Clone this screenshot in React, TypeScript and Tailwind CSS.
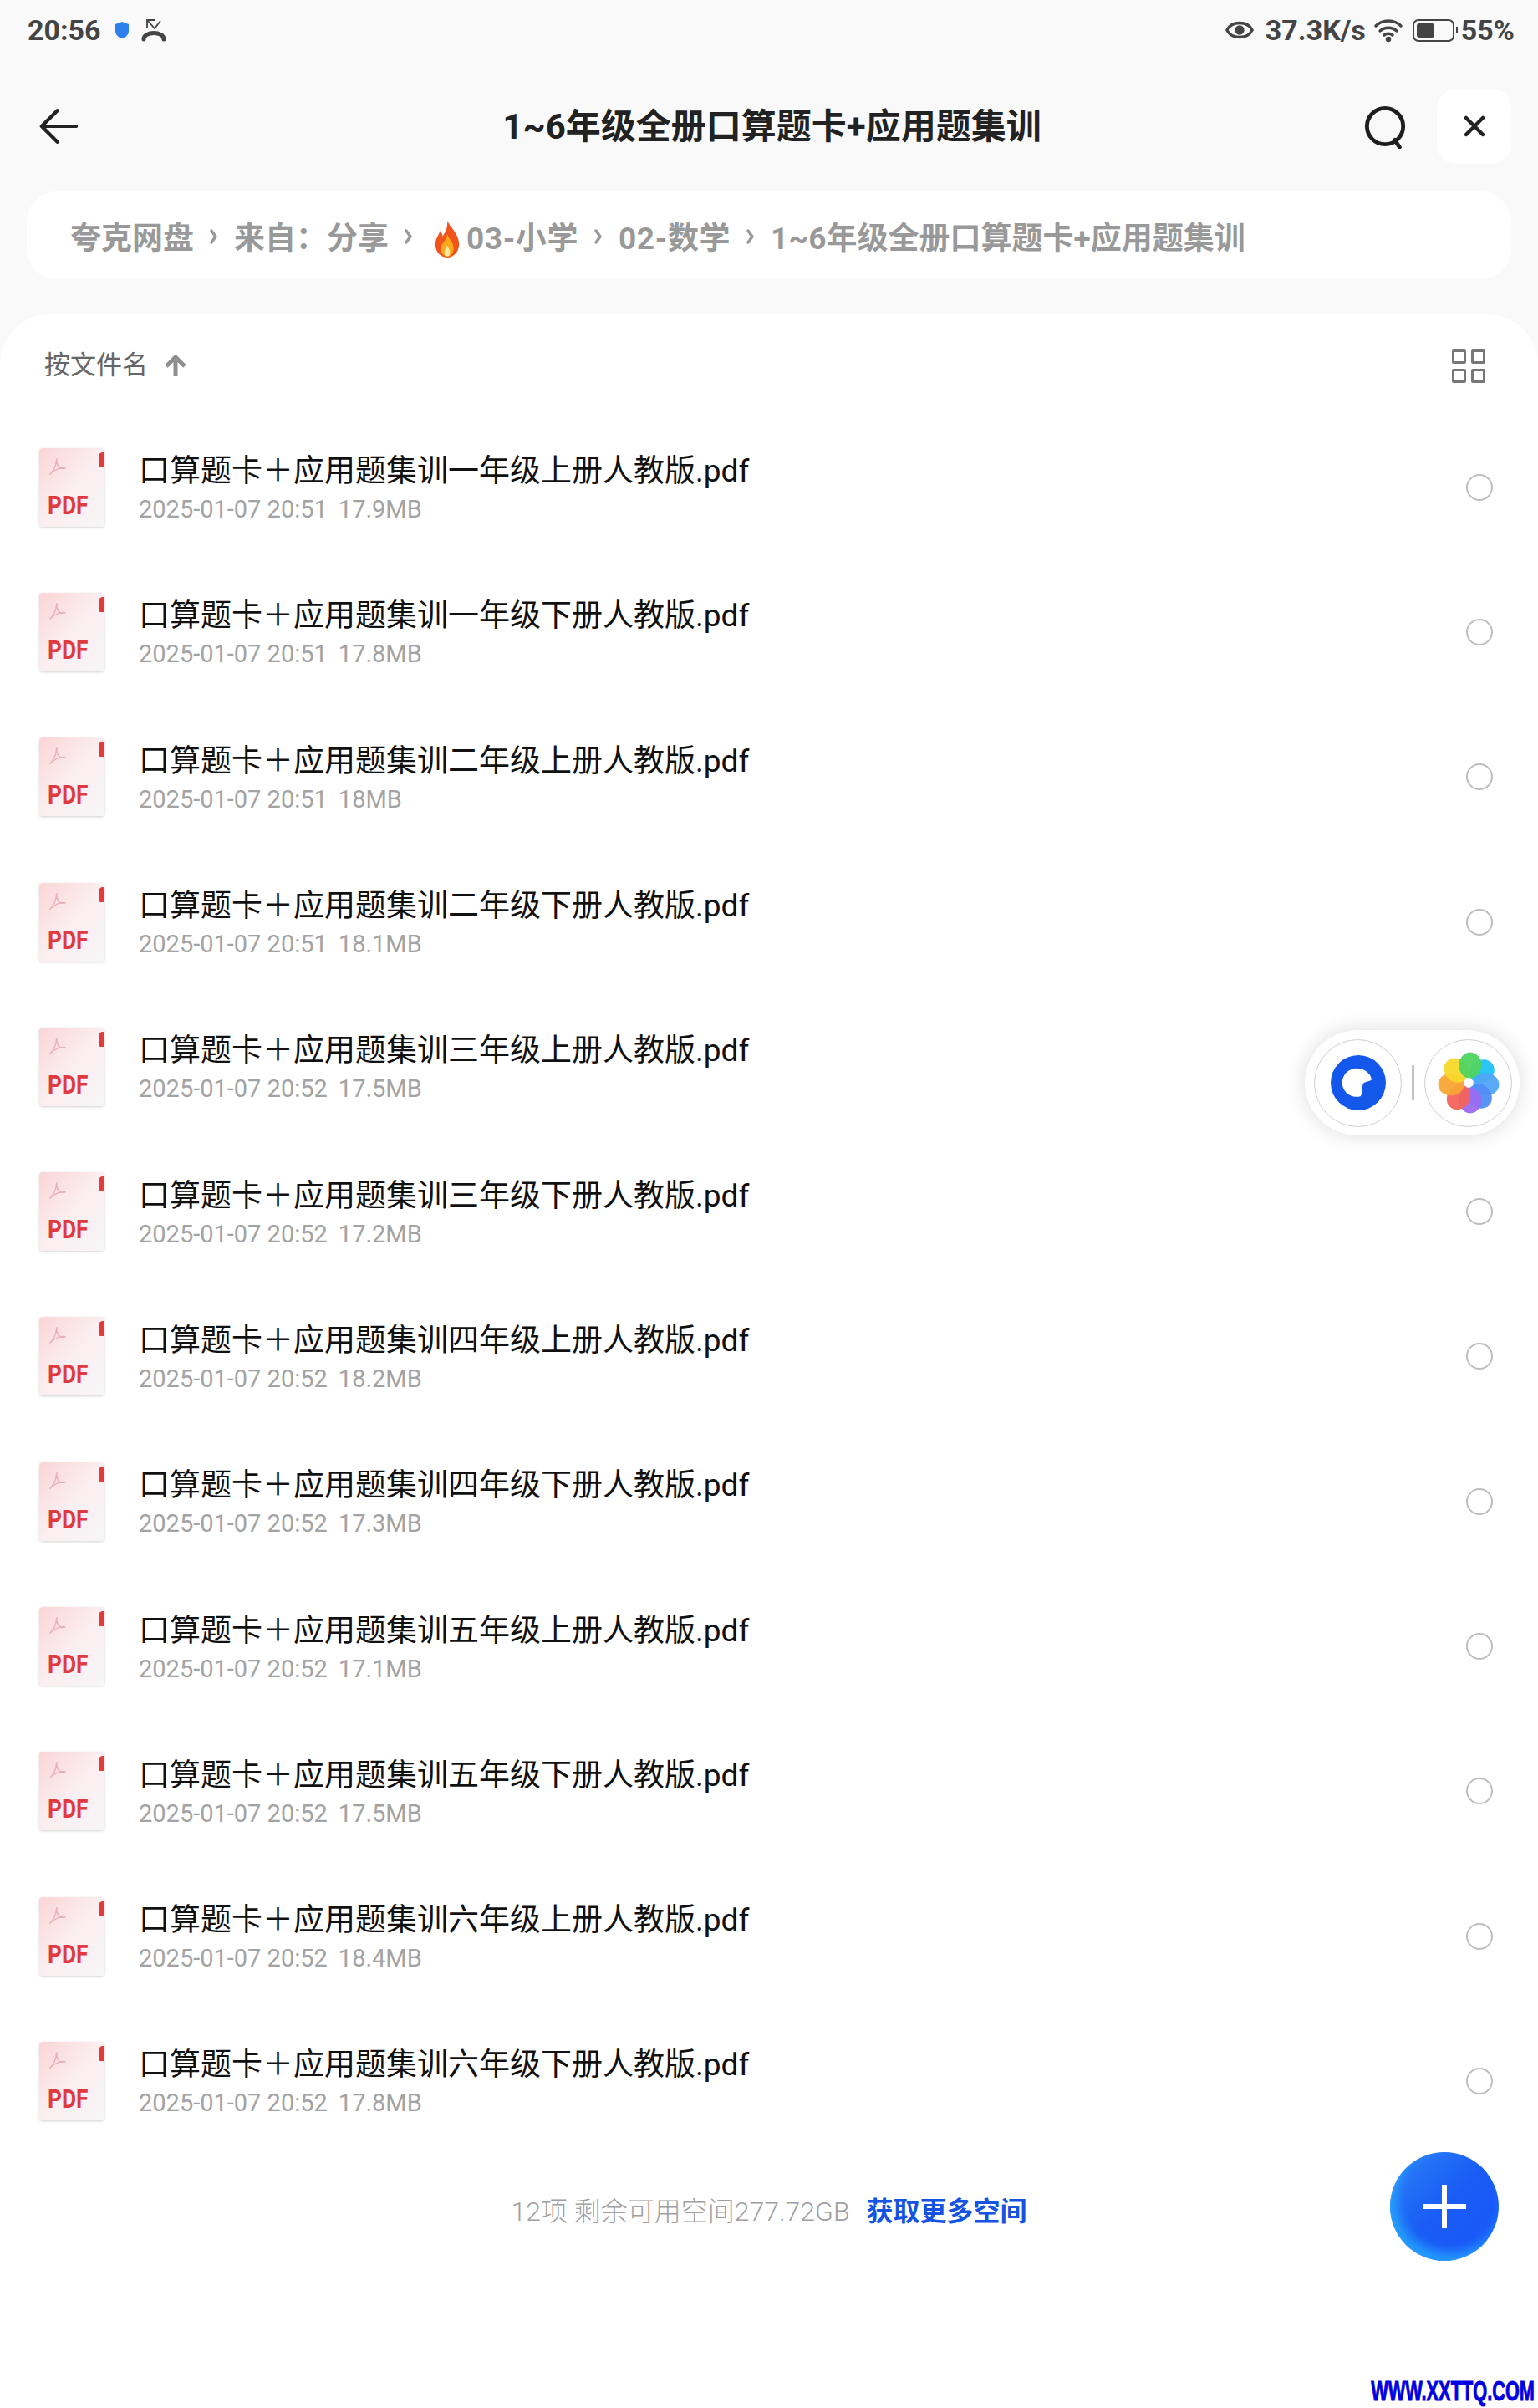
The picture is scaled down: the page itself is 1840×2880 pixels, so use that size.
const files = [
  { grade: "一年级上册", date: "2025-01-07 20:51", size: "17.9MB" },
  { grade: "一年级下册", date: "2025-01-07 20:51", size: "17.8MB" },
  { grade: "二年级上册", date: "2025-01-07 20:51", size: "18MB" },
  { grade: "二年级下册", date: "2025-01-07 20:51", size: "18.1MB" },
  { grade: "三年级上册", date: "2025-01-07 20:52", size: "17.5MB", hideRadio: true },
  { grade: "三年级下册", date: "2025-01-07 20:52", size: "17.2MB" },
  { grade: "四年级上册", date: "2025-01-07 20:52", size: "18.2MB" },
  { grade: "四年级下册", date: "2025-01-07 20:52", size: "17.3MB" },
  { grade: "五年级上册", date: "2025-01-07 20:52", size: "17.1MB" },
  { grade: "五年级下册", date: "2025-01-07 20:52", size: "17.5MB" },
  { grade: "六年级上册", date: "2025-01-07 20:52", size: "18.4MB" },
  { grade: "六年级下册", date: "2025-01-07 20:52", size: "17.8MB" },
];

const petals = [
  { angle: 50, color: "#1fc1f5" },
  { angle: 95, color: "#4fa6f7" },
  { angle: 140, color: "#4f8df5" },
  { angle: 175, color: "#9a6cf0" },
  { angle: 215, color: "#f4625a" },
  { angle: 265, color: "#f9a535" },
  { angle: 315, color: "#f7d92a" },
  { angle: 5, color: "#4fd45f" },
];

const Chevron = () => (
  <svg viewBox="0 0 12 24" className="w-[12px] h-[24px] mx-[18px] mb-[6px]" fill="none">
    <path d="M3 5l5 7-5 7" stroke="#999" strokeWidth="3.5" strokeLinecap="round" strokeLinejoin="round" />
  </svg>
);

const PdfIcon = () => (
  <div className="relative w-[78px] h-[94px] shrink-0 rounded-[4px] bg-gradient-to-br from-[#fbd5d5] via-[#fbeef0] to-[#f6f6f8] shadow-[0_1px_3px_rgba(0,0,0,0.18)]">
    <div className="absolute right-0 top-[5px] w-[7px] h-[18px] rounded-tl-[5px] rounded-bl-[2px] bg-[#e23b3b]" />
    <svg viewBox="0 0 24 24" className="absolute left-[11px] top-[11px] w-[22px] h-[22px]" fill="none">
      <path d="M11 2c-1 4 1 8 2 10 2 2 6 3 9 2-4-1-12 0-20 8 3-3 7-9 8-15 0-2 0-4 1-5z" stroke="#eab0b6" strokeWidth="1.6" strokeLinejoin="round" />
    </svg>
    <span className="absolute left-[10px] top-[51px] origin-left scale-x-[0.85] text-[31px] leading-[36px] font-bold text-[#df3a40] font-['Roboto',sans-serif]">
      PDF
    </span>
  </div>
);

const FileRow = ({ grade, date, size, hideRadio }: { grade: string; date: string; size: string; hideRadio?: boolean }) => (
  <div className="h-[173.3px] pl-[47px] pr-[54px] flex items-center">
    <PdfIcon />
    <div className="ml-[41px] flex-1">
      <div className="mt-[3px] text-[37px] leading-[46px] text-[#111] font-['Roboto','Noto_Sans_CJK_SC',sans-serif]">
        口算题卡＋应用题集训{grade}人教版.pdf
      </div>
      <div className="mt-[4px] text-[29px] leading-[36px] text-[#a3a3a3] font-['Roboto','Noto_Sans_CJK_SC',sans-serif]">
        {date}
        <span className="ml-[13px]">{size}</span>
      </div>
    </div>
    {!hideRadio && <div className="w-[32px] h-[32px] rounded-full border-[2.5px] border-[#bdbdbd]" />}
  </div>
);

export default function App() {
  return (
    <div className="relative w-[1840px] h-[2880px] overflow-hidden bg-[#f9f9f9] font-['Roboto','Noto_Sans_CJK_SC',sans-serif]">
      {/* status bar */}
      <div className="h-[72px] pl-[33px] pr-[28px] flex items-center justify-between text-[34px] font-bold text-[#444]">
        <div className="flex items-center">
          <span>20:56</span>
          <svg viewBox="0 0 18 22" className="ml-[16px] w-[18px] h-[22px]">
            <path d="M9 1l8 3v8c0 5-4 8-8 9-4-1-8-4-8-9V4z" fill="#2f80ed" />
          </svg>
          <svg viewBox="0 0 30 28" className="ml-[14px] w-[30px] h-[28px]" fill="none" stroke="#444">
            <path d="M7 11V2h9M8 3l8 9 7-9" strokeWidth="1.8" />
            <path d="M3 25c0-10 24-10 24 0" strokeWidth="5" strokeLinecap="round" />
          </svg>
        </div>
        <div className="flex items-center">
          <svg viewBox="0 0 36 24" className="w-[34px] h-[24px]" fill="none">
            <path d="M2 12c6-12 26-12 32 0-6 12-26 12-32 0z" stroke="#444" strokeWidth="3.5" />
            <circle cx="18" cy="12" r="6" fill="#444" />
          </svg>
          <span className="ml-[14px]">37.3K/s</span>
          <svg viewBox="0 0 36 30" className="ml-[8px] w-[38px] h-[30px]" fill="none" stroke="#444" strokeWidth="3.5" strokeLinecap="round">
            <path d="M3 10c8-8 22-8 30 0M8 16c6-5 14-5 20 0M13 21c3-2 7-2 10 0" />
            <circle cx="18" cy="26" r="1.5" fill="#444" />
          </svg>
          <div className="ml-[10px] relative w-[50px] h-[27px] rounded-[7px] border-[2.5px] border-[#444]">
            <div className="absolute left-[3px] top-[3px] bottom-[3px] w-[21px] rounded-[3px] bg-[#444]" />
          </div>
          <div className="ml-[2px] w-[2px] h-[8px] bg-[#444]" />
          <span className="ml-[4px]">55%</span>
        </div>
      </div>

      {/* title bar */}
      <div className="relative h-[127px] mt-[-5px] pt-[32px] flex items-start justify-center">
        <svg viewBox="0 0 50 46" className="absolute left-[47px] top-[62px] w-[47px] h-[44px]" fill="none" stroke="#222" strokeWidth="4.5" strokeLinecap="round" strokeLinejoin="round">
          <path d="M47 23H4M23 3L3 23l20 20" />
        </svg>
        <h1 className="ml-[7px] mt-[23px] text-[42px] leading-[60px] font-bold text-[#222]">1~6年级全册口算题卡+应用题集训</h1>
        <svg viewBox="0 0 54 54" className="absolute left-[1632px] top-[59px] w-[52px] h-[52px]" fill="none" stroke="#1f1f1f" strokeWidth="5">
          <circle cx="26" cy="26" r="22.5" />
          <path d="M38 43l6 9" strokeLinecap="round" />
        </svg>
        <div className="absolute left-[1719px] top-[39px] w-[89px] h-[90px] rounded-[24px] bg-white flex items-center justify-center">
          <svg viewBox="0 0 26 26" className="w-[26px] h-[26px]" fill="none" stroke="#222" strokeWidth="4.5" strokeLinecap="round">
            <path d="M3 3l20 20M23 3L3 23" />
          </svg>
        </div>
      </div>

      {/* breadcrumb */}
      <div className="mx-[32px] mt-[35px] h-[105px] rounded-[36px] bg-white pl-[52px] pt-[8px] flex items-center text-[37px] font-bold text-[#999]">
        <span>夸克网盘</span>
        <Chevron />
        <span>来自：分享</span>
        <Chevron />
        <svg viewBox="0 0 30 42" className="w-[44px] h-[46px] mr-[1px]">
          <path d="M15 1c3 7 12 13 13 25 0 9-6 15-13 15S2 35 2 27c0-7 4-10 5-15 2 2 3 4 3 6 3-4 6-10 5-17z" fill="#f0531c" />
          <path d="M15 16c2 5 7 9 7 15 0 5-3 9-7 9s-7-4-7-8c0-6 6-9 7-16z" fill="#fba71b" />
          <path d="M15 28c1 3 3 4 3 7 0 3-1 5-3 5s-3-2-3-5c0-3 2-4 3-7z" fill="#fde9a8" />
        </svg>
        <span className="tracking-[0.6px]">03-小学</span>
        <Chevron />
        <span className="tracking-[0.6px]">02-数学</span>
        <Chevron />
        <span>1~6年级全册口算题卡+应用题集训</span>
      </div>

      {/* file sheet */}
      <div className="mt-[42px] h-[2504px] rounded-t-[60px] bg-white">
        <div className="h-[120px] pt-[3px] pl-[53px] pr-[63px] flex items-center justify-between">
          <div className="flex items-center text-[31px] text-[#666]">
            <span>按文件名</span>
            <svg viewBox="0 0 28 28" className="ml-[19px] w-[28px] h-[28px]" fill="none" stroke="#8e8e8e" strokeWidth="5">
              <path d="M14 26V4M3 14L14 3l11 11" />
            </svg>
          </div>
          <div className="grid grid-cols-2 gap-[6px]">
            {[0, 1, 2, 3].map((i) => (
              <div key={i} className="w-[17px] h-[17px] rounded-[2px] border-[3.5px] border-[#777]" />
            ))}
          </div>
        </div>
        <div>
          {files.map((file) => (
            <FileRow key={file.grade} {...file} />
          ))}
        </div>
        <div className="mt-[47px] flex items-center justify-center text-[32px] leading-[44px] text-[#a0a0a0]">
          <span className="font-light">12项 剩余可用空间277.72GB</span>
          <span className="ml-[20px] font-bold text-[#1553e0]">获取更多空间</span>
        </div>
      </div>

      {/* floating app switcher */}
      <div className="absolute left-[1561px] top-[1232px] w-[257px] h-[126px] rounded-full bg-white shadow-[0_0_24px_rgba(0,0,0,0.14)] flex items-center pl-[11px]">
        <div className="w-[105px] h-[105px] rounded-full border border-[#cfcfcf] flex items-center justify-center">
          <svg viewBox="0 0 66 66" className="w-[66px] h-[66px]">
            <circle cx="33" cy="33" r="33" fill="#1358ea" />
            <path d="M33 16a17 17 0 0 1 16 13c-2 3-8 2-10 5-2 3 0 9-3 15a17 17 0 1 1-3-33z" fill="#fff" />
          </svg>
        </div>
        <div className="mx-[12px] w-[3px] h-[42px] bg-[#c4c4c4]" />
        <div className="w-[105px] h-[105px] rounded-full border border-[#cfcfcf] flex items-center justify-center">
          <svg viewBox="-37 -37 74 74" className="w-[74px] h-[74px]">
            {petals.map((p) => (
              <ellipse key={p.angle} cx="0" cy="-21" rx="13.5" ry="15.5" fill={p.color} fillOpacity="0.95" transform={`rotate(${p.angle})`} />
            ))}
            <circle r="4.5" fill="#fff" />
          </svg>
        </div>
      </div>

      {/* add button */}
      <div className="absolute left-[1663px] top-[2574px] w-[130px] h-[130px] rounded-full bg-gradient-to-br from-[#2f80f6] via-[#1a5cf5] to-[#1a55fb] shadow-[inset_7px_-9px_14px_rgba(40,180,255,0.75)] flex items-center justify-center">
        <svg viewBox="0 0 52 52" className="w-[52px] h-[52px]" fill="none" stroke="#fff" strokeWidth="6">
          <path d="M26 0v52M0 26h52" />
        </svg>
      </div>

      {/* watermark */}
      <div className="absolute right-[4px] bottom-[3px] origin-right scale-x-[0.64] text-[34px] leading-[36px] font-bold text-[#0000e0] [-webkit-text-stroke:1px_#0000e0] font-['Liberation_Sans',sans-serif]">
        WWW.XXTTQ.COM
      </div>
    </div>
  );
}
